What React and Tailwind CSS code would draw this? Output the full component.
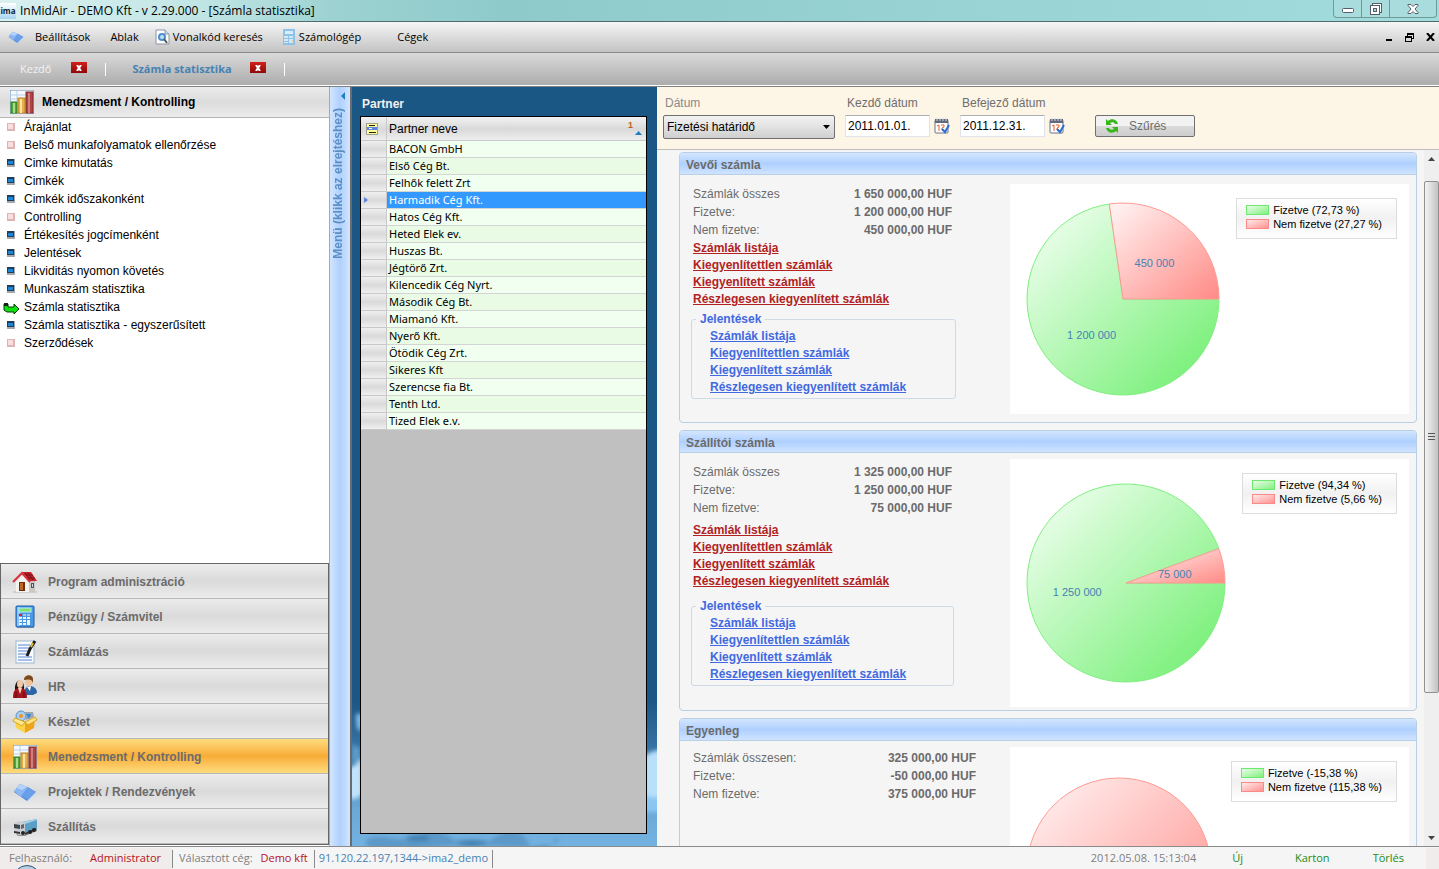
import React, { useState } from "react";

const menuItems = [
  { label: "Árajánlat", kind: "pink" },
  { label: "Belső munkafolyamatok ellenőrzése", kind: "pink" },
  { label: "Cimke kimutatás", kind: "blue" },
  { label: "Cimkék", kind: "blue" },
  { label: "Cimkék időszakonként", kind: "blue" },
  { label: "Controlling", kind: "pink" },
  { label: "Értékesítés jogcímenként", kind: "blue" },
  { label: "Jelentések", kind: "blue" },
  { label: "Likviditás nyomon követés", kind: "blue" },
  { label: "Munkaszám statisztika", kind: "blue" },
  { label: "Számla statisztika", kind: "active" },
  { label: "Számla statisztika - egyszerűsített", kind: "blue" },
  { label: "Szerződések", kind: "pink" },
];

const partners = [
  "BACON GmbH",
  "Első Cég Bt.",
  "Felhők felett Zrt",
  "Harmadik Cég Kft.",
  "Hatos Cég Kft.",
  "Heted Elek ev.",
  "Huszas Bt.",
  "Jégtörő Zrt.",
  "Kilencedik Cég Nyrt.",
  "Második Cég Bt.",
  "Miamanó Kft.",
  "Nyerő Kft.",
  "Ötödik Cég Zrt.",
  "Sikeres Kft",
  "Szerencse fia Bt.",
  "Tenth Ltd.",
  "Tized Elek e.v.",
];

const links = [
  "Számlák listája",
  "Kiegyenlítettlen számlák",
  "Kiegyenlített számlák",
  "Részlegesen kiegyenlített számlák",
];

/* ---------- icons ---------- */

const HouseIcon = () => (
  <svg width="26" height="24" viewBox="0 0 26 24">
    <path d="M1 21h24v2H1z" fill="#cfcfcf" />
    <path d="M4 12l7-7 7 7v10H4z" fill="#f4f2ef" />
    <path d="M17 11h6v11h-6z" fill="#cbc7c2" />
    <path d="M10 2h9l6 9h-7z" fill="#c4222b" />
    <path d="M13 3l5 7M16 3l5 7M12 5h9M15 8h8" stroke="#7d1016" fill="none" />
    <path d="M1 12l9-9 8 9" fill="none" stroke="#d8303a" strokeWidth="2" />
    <path d="M7 12h6v9H7z" fill="#6f2e0c" />
    <path d="M8 13h3v7H8z" fill="#c0661f" />
    <path d="M19 13h3v5h-3z" fill="#555" />
    <path d="M20 14h1v3h-1z" fill="#c9d6e2" />
  </svg>
);

const CalcIcon = () => (
  <svg width="22" height="24" viewBox="0 0 22 24">
    <path d="M3 22h17v1H4z" fill="#a8a8a8" />
    <rect x="2" y="1" width="18" height="21" rx="1" fill="#4a97e6" stroke="#1a5cae" />
    <rect x="3" y="2" width="3" height="19" fill="#8cc4fa" />
    <rect x="5" y="3" width="12" height="4" fill="#7fe06a" stroke="#b9e8ff" />
    <path d="M5 9h3v2H5z" fill="#d8201c" />
    <path d="M9 9h3v2H9zM13 9h3v2h-3z" fill="#a9c3e2" />
    <path d="M5 12h3v2H5zM9 12h3v2H9zM13 12h3v2h-3zM5 15h3v2H5zM9 15h3v2H9zM5 18h3v2H5zM9 18h3v2H9zM13 15h3v5h-3z" fill="#eef6ff" />
  </svg>
);

const NotePenIcon = () => (
  <svg width="24" height="24" viewBox="0 0 24 24">
    <rect x="3" y="1" width="18" height="22" fill="#f7fbff" stroke="#9db9cc" />
    <path d="M5 5h12M5 8h11M5 11h10M5 14h8M5 17h14M5 20h14" stroke="#5b86cf" />
    <path d="M22 1l-5 8-3 7" stroke="#1a1a1a" strokeWidth="3" fill="none" />
    <path d="M20 3l-2 4" stroke="#e8b92e" strokeWidth="2" />
  </svg>
);

const PeopleIcon = () => (
  <svg width="26" height="24" viewBox="0 0 26 24">
    <path d="M12 20c0-7 3-9 6-9s7 2 7 7l-4 2z" fill="#2a66a8" />
    <path d="M15 12l3 4 1-5z" fill="#fff" />
    <ellipse cx="17" cy="6" rx="4" ry="5" fill="#f0c49a" />
    <path d="M12 5c0-6 9-6 9-1v4c-1-4-4-4-9-3z" fill="#7a4a1c" />
    <path d="M3 15C2 3 13 2 12 15z" fill="#1f1614" />
    <ellipse cx="8" cy="9" rx="3" ry="4" fill="#f2c9a5" />
    <path d="M1 23c0-7 2-10 7-10s7 3 7 10z" fill="#a5141f" />
    <path d="M6 13l2 6 2-6z" fill="#f6d5bb" />
    <path d="M4 17v6M12 17v6" stroke="#5f0a10" />
  </svg>
);

const BoxIcon = () => (
  <svg width="26" height="24" viewBox="0 0 26 24">
    <circle cx="9" cy="6" r="5" fill="#a8cff0" stroke="#5a93c9" />
    <circle cx="9" cy="6" r="2" fill="#f0932a" />
    <path d="M13 2h8l1 5-8 3z" fill="#9aa6b2" />
    <path d="M14 4l3 5 2-5z" fill="#3489d8" />
    <path d="M3 9l10 4v10l-9-5z" fill="#fbd24a" />
    <path d="M13 13l10-4-1 9-9 5z" fill="#f0a41a" />
    <path d="M3 8l-2 3 9 5 3-4z" fill="#ffe98a" stroke="#d9a21e" />
    <path d="M23 7l2 3-9 5-3-3z" fill="#ffe27a" stroke="#d9a21e" />
  </svg>
);

const ChartIcon = () => (
  <svg width="24" height="24" viewBox="0 0 24 24">
    <rect x="0" y="0" width="24" height="24" fill="#f6fafe" stroke="#5d86b8" />
    <path d="M1 5h15M1 9h15M7 1v10" stroke="#b9cfe8" fill="none" />
    <rect x="1" y="12" width="6" height="11" fill="#55a83c" stroke="#2f7a24" />
    <rect x="3" y="13" width="2" height="10" fill="#a8dd90" />
    <rect x="8" y="8" width="7" height="15" fill="#e3b04c" stroke="#b98222" />
    <rect x="10" y="9" width="2" height="14" fill="#fbe3a4" />
    <rect x="16" y="2" width="7" height="21" fill="#ad4545" stroke="#842c2c" />
    <rect x="18" y="3" width="2" height="20" fill="#cf7d7d" />
  </svg>
);

const FolderIcon = ({ size = 24 }) => (
  <svg width={size} height={size} viewBox="0 0 24 24">
    <path d="M1 12l6-8 7 3 9 5-9 9z" fill="#4f86d6" />
    <path d="M1 11l6-7 7 3 3 3-9 7z" fill="#8ab8f4" />
    <path d="M8 16l7-9 8 5-8 8z" fill="#6a9ee8" />
    <path d="M7 4l7 3-5 3-5-2z" fill="#b5d4fb" />
    <path d="M14 21l9-9v2l-9 8z" fill="#c3daf6" />
  </svg>
);

const TruckIcon = () => (
  <svg width="24" height="18" viewBox="0 0 24 18">
    <path d="M3 16l9 1 12-6v2l-12 5H5z" fill="#8c8c8c" />
    <path d="M9 4l15-3v10l-12 5z" fill="#5b9fc4" />
    <path d="M9 4l15-3v1L12 6z" fill="#9fd0e8" />
    <path d="M1 5l6-2 5 2v10l-6 2-5-3z" fill="#c9ccd0" />
    <path d="M1 6l6 1v4l-6-1z" fill="#3c444c" />
    <path d="M8 7l3-1v4l-3 1z" fill="#5b6670" />
    <path d="M1 13l6 1v2l-6-1zM12 15l11-5v2l-11 5z" fill="#333" />
    <circle cx="10" cy="15" r="2" fill="#222" />
    <circle cx="17" cy="14" r="2" fill="#222" />
    <circle cx="21" cy="12" r="2" fill="#222" />
  </svg>
);

const SearchDocIcon = () => (
  <svg width="16" height="16" viewBox="0 0 16 16">
    <path d="M1 1h9l4 4v10H1z" fill="#fff" stroke="#8a94a6" />
    <path d="M10 1v4h4" fill="#d5dde8" stroke="#8a94a6" />
    <circle cx="7" cy="8" r="3" fill="#bfe3fb" stroke="#4f8fd0" strokeWidth="2" />
    <path d="M9 10l3 4" stroke="#555" strokeWidth="2" />
  </svg>
);

const SmallCalcIcon = () => (
  <svg width="12" height="16" viewBox="0 0 12 16">
    <rect x="0" y="0" width="12" height="16" fill="#8fc2e8" />
    <rect x="2" y="2" width="8" height="3" fill="#d8eefb" />
    <path d="M1 7h4v2H1zM6 7h4v2H6zM1 10h4v2H1zM6 10h4v4H6zM1 13h4v1H1z" fill="#d4e8f6" />
    <path d="M8 11h2v2H8z" fill="#f0d9a0" />
  </svg>
);

const CalendarIcon = () => (
  <svg width="16" height="16" viewBox="0 0 16 16">
    <rect x="1" y="2" width="13" height="13" rx="1" fill="#fff" stroke="#6a7088" />
    <path d="M1 1h13v4H1z" fill="#62687c" />
    <path d="M3 0v3M6 0v3M9 0v3M12 0v3" stroke="#d5dae6" />
    <path d="M3 8l2-1v6M7 7h3v2l-2 1v2h2" stroke="#e3602a" fill="none" />
    <path d="M8 11l3 3 4-7" stroke="#2a6fcf" strokeWidth="2" fill="none" />
  </svg>
);

const RefreshIcon = () => (
  <svg width="14" height="14" viewBox="0 0 14 14">
    <path d="M1 0v6h6L5 4c2-1 4-1 5 1h3C12 0 6-1 3 2z" fill="#36b81a" />
    <path d="M13 14V8H7l2 2c-2 1-4 1-5-1H1c1 5 7 6 10 3z" fill="#36b81a" />
  </svg>
);

const ItemIcon = ({ kind }) => {
  if (kind === "active") {
    return (
      <svg width="16" height="14" viewBox="0 0 16 14" className="mt-1">
        <path d="M1 2h4v3h6V2l5 5-5 5v-2H4L1 8z" fill="#0fe00f" stroke="#063b06" />
        <path d="M1 1h4v3H1z" fill="#0a2a0a" />
      </svg>
    );
  }
  if (kind === "pink") {
    return (
      <svg width="8" height="8" viewBox="0 0 8 8">
        <rect width="8" height="8" fill="#dfb4b4" />
        <rect x="1" y="1" width="5" height="5" fill="#f9dede" />
      </svg>
    );
  }
  return (
    <svg width="8" height="8" viewBox="0 0 8 8">
      <rect width="8" height="8" fill="#a4a8ad" />
      <rect width="7" height="6" fill="#1d3f5c" />
      <rect x="1" y="2" width="5" height="3" fill="#1c86d8" />
    </svg>
  );
};

const modules = [
  { label: "Program adminisztráció", Icon: HouseIcon },
  { label: "Pénzügy / Számvitel", Icon: CalcIcon },
  { label: "Számlázás", Icon: NotePenIcon },
  { label: "HR", Icon: PeopleIcon },
  { label: "Készlet", Icon: BoxIcon },
  { label: "Menedzsment / Kontrolling", Icon: ChartIcon },
  { label: "Projektek / Rendezvények", Icon: FolderIcon },
  { label: "Szállítás", Icon: TruckIcon },
];

/* ---------- window chrome ---------- */

const TitleBar = () => (
  <header className="flex h-[22px] shrink-0 items-start justify-between border-b border-[#4f6b6b] bg-linear-to-r from-[#b5e2e0] via-[#8fcaca] via-35% to-[#a3dcdc]">
    <div className="flex h-[21px] items-center gap-1 bg-linear-to-r from-[#d9f0ef] via-[#c6e8e7] to-transparent pr-4">
      <span className="h-4 w-4 overflow-hidden bg-linear-to-b from-white to-[#a8d4f0] text-center text-[8px] leading-4 font-bold text-[#123]">
        ima
      </span>
      <h1 className="text-xs text-black">InMidAir - DEMO Kft - v 2.29.000 - [Számla statisztika]</h1>
    </div>
    <div className="mr-0.5 flex h-[18px] rounded-b border border-t-0 border-[#6f9a9a] bg-[#a9dcdc]">
      <button type="button" aria-label="Kis méret" className="flex w-7 items-center justify-center border-r border-[#6f9a9a]">
        <svg width="12" height="5" viewBox="0 0 12 5" className="mt-1">
          <rect x="0.5" y="0.5" width="11" height="4" rx="1" fill="#fff" stroke="#555c6b" />
        </svg>
      </button>
      <button type="button" aria-label="Előző méret" className="flex w-7 items-center justify-center border-r border-[#6f9a9a]">
        <svg width="12" height="12" viewBox="0 0 12 12">
          <rect x="2.5" y="0.5" width="9" height="9" fill="#fff" stroke="#555c6b" />
          <rect x="0.5" y="2.5" width="9" height="9" fill="#fff" stroke="#555c6b" />
          <rect x="3.5" y="5.5" width="3" height="3" fill="#a9dcdc" stroke="#555c6b" />
        </svg>
      </button>
      <button type="button" aria-label="Bezárás" className="flex w-[46px] items-center justify-center">
        <svg width="12" height="10" viewBox="0 0 12 10">
          <path d="M1 0.5h3l2 2 2-2h3v1L8 5l3 3.500v1H8l-2-2-2 2H1v-1L4 5 1 1.500z" fill="#fff" stroke="#555c6b" />
        </svg>
      </button>
    </div>
  </header>
);

const MenuBar = () => (
  <nav className="flex h-[31px] shrink-0 items-center justify-between border-b border-[#8a8a8a] bg-linear-to-b from-[#f6f6f6] to-[#c3c3c3] pr-1 pl-2 text-[11px] text-black">
    <div className="flex items-center">
      <FolderIcon size={16} />
      <button type="button" className="ml-[11px]">Beállítások</button>
      <button type="button" className="ml-5">Ablak</button>
      <button type="button" className="ml-4 flex items-center gap-0.5">
        <SearchDocIcon />
        Vonalkód keresés
      </button>
      <button type="button" className="ml-5 flex items-center gap-1">
        <SmallCalcIcon />
        Számológép
      </button>
      <button type="button" className="ml-9">Cégek</button>
    </div>
    <div className="flex items-center gap-3">
      <button type="button" aria-label="Ablak kis méret">
        <svg width="8" height="8" viewBox="0 0 8 8"><path d="M1 6h6v2H1z" /></svg>
      </button>
      <button type="button" aria-label="Ablak előző méret">
        <svg width="9" height="9" viewBox="0 0 9 9">
          <path d="M2 0h7v6H7V5h1V2H3v1H2zM0 3h7v6H0zM1 5v3h5V5z" fillRule="evenodd" />
        </svg>
      </button>
      <button type="button" aria-label="Ablak bezárása">
        <svg width="9" height="8" viewBox="0 0 9 8">
          <path d="M1 0l7 8M8 0L1 8" stroke="#000" strokeWidth="2" />
        </svg>
      </button>
    </div>
  </nav>
);

const CloseTab = ({ label }) => (
  <button
    type="button"
    aria-label={label}
    className="mb-1 flex h-[11px] w-4 items-center justify-center bg-linear-to-b from-[#d4201c] to-[#8e0808]"
  >
    <svg width="6" height="6" viewBox="0 0 6 6">
      <path d="M1 0l4 6M5 0L1 6" stroke="#fff" strokeWidth="2" />
    </svg>
  </button>
);

const TabBar = () => (
  <div className="flex h-[34px] shrink-0 items-center border-b border-[#808080] bg-linear-to-b from-[#dadada] to-[#ababab] pl-5 text-[11px] shadow-[inset_0_-1px_0_#fff]">
    <button type="button" className="mr-5 text-[#f2f2f2]">Kezdő</button>
    <CloseTab label="Kezdő bezárása" />
    <span className="ml-[18px] h-[13px] w-px bg-white" />
    <button type="button" className="mr-[18px] ml-[26px] font-bold text-[#4682b4]">Számla statisztika</button>
    <CloseTab label="Számla statisztika bezárása" />
    <span className="ml-[18px] h-[13px] w-px bg-white" />
  </div>
);

/* ---------- left side ---------- */

const Sidebar = () => {
  const [active, setActive] = useState("Menedzsment / Kontrolling");

  return (
    <aside className="flex w-[329px] shrink-0 flex-col bg-white">
      <div className="flex h-[31px] shrink-0 items-center gap-2 border-b border-[#b5b5b5] bg-linear-to-b from-[#ececec] via-[#dcdcdc] to-[#ececec] pl-[10px]">
        <ChartIcon />
        <h2 className="text-xs font-bold text-black">Menedzsment / Kontrolling</h2>
      </div>
      <ul className="flex-1">
        {menuItems.map((item) => (
          <li key={item.label}>
            <button type="button" className="flex h-[18px] w-full items-center text-left text-xs text-black">
              <span className="flex w-[22px] shrink-0 justify-center">
                <ItemIcon kind={item.kind} />
              </span>
              <span className="pl-0.5">{item.label}</span>
            </button>
          </li>
        ))}
      </ul>
      <div className="mb-px border border-[#666]">
        {modules.map(({ label, Icon }) => (
          <button
            key={label}
            type="button"
            onClick={() => setActive(label)}
            className={`flex h-[35px] w-full items-center border-b border-[#b8b8b8] pt-0.5 text-left text-xs font-bold text-[#6b6b6b] ${
              active === label
                ? "bg-linear-to-b from-[#fddc7c] via-[#f8ac35] to-[#fddc7c]"
                : "bg-linear-to-b from-[#ececec] via-[#dadada] to-[#ececec]"
            }`}
          >
            <span className="flex w-[47px] shrink-0 justify-center">
              <Icon />
            </span>
            {label}
          </button>
        ))}
      </div>
    </aside>
  );
};

const CollapseStrip = () => (
  <button
    type="button"
    className="flex w-[23px] shrink-0 flex-col items-center border-r-2 border-l border-r-[#6b6b6b] border-l-[#a9a9a9] bg-linear-to-r from-[#d2e5ff] via-[#afd0ff] to-[#d2e5ff] pt-[5px]"
  >
    <svg width="5" height="8" viewBox="0 0 5 8" className="ml-1">
      <path d="M5 0v8L1 4z" fill="#1a7fc4" />
    </svg>
    <span className="mt-2 mr-1 rotate-180 text-xs leading-4 font-bold whitespace-nowrap text-[#5b8fc4] [writing-mode:vertical-rl]">
      Menü (klikk az elrejtéshez)
    </span>
  </button>
);

/* ---------- partner grid ---------- */

const SkyBackdrop = () => (
  <svg viewBox="0 0 305 146" preserveAspectRatio="none" className="absolute inset-x-0 bottom-0 h-[146px] w-full">
    <defs>
      <linearGradient id="sky" x1="0" y1="0" x2="0" y2="1">
        <stop offset="0" stopColor="#1b5785" />
        <stop offset="0.4" stopColor="#3c79aa" />
        <stop offset="0.75" stopColor="#6aa8d8" />
        <stop offset="1" stopColor="#74b2e2" />
      </linearGradient>
      <filter id="haze" x="-20%" y="-20%" width="140%" height="140%">
        <feGaussianBlur stdDeviation="2" />
      </filter>
    </defs>
    <rect width="305" height="146" fill="url(#sky)" />
    <g filter="url(#haze)">
      <path d="M4 14l6 0v18l-5-4z" fill="#8cc6ef" />
      <path d="M0 42q4 8 8 4v16H0z" fill="#5b9ccb" />
      <path d="M-4 68q8-2 14-10v36q-6 8-14 4z" fill="#c0e3fb" />
      <path d="M292 56q8-6 18-6v46q-8 6-18 0z" fill="#b9e0fb" />
      <path d="M290 92q8 8 20 4v16h-20z" fill="#8ac6f2" />
      <path d="M14 140q10-6 24-2t30-4 34 6 40-2 34 4 30-6v6q-30 8-60 4t-70 2-62-2z" fill="#5b98c8" />
      <ellipse cx="66" cy="138" rx="12" ry="3" fill="#427eae" />
      <ellipse cx="120" cy="143" rx="16" ry="3" fill="#427eae" />
    </g>
  </svg>
);

const PartnerPanel = () => {
  const [selected, setSelected] = useState("Harmadik Cég Kft.");

  return (
    <section className="relative flex w-[305px] shrink-0 flex-col overflow-hidden bg-[#1b5785] px-2 pb-3">
      <SkyBackdrop />
      <h2 className="flex h-[29px] items-center pt-1 pl-0.5 text-xs font-bold text-[#f0f0f0]">Partner</h2>
      <div className="relative mr-0.5 flex-1 border border-black bg-[#c0c0c0]">
        <table className="w-full table-fixed border-separate border-spacing-0 text-[11px] leading-4 text-black">
          <thead>
            <tr className="h-6 bg-linear-to-b from-[#f2f2f2] via-[#d9d9d9] to-[#f0f0f0]">
              <th className="w-[26px] border-r border-b border-[#c8c8c8] p-0">
                <svg width="12" height="12" viewBox="0 0 12 12" className="mr-auto ml-[5px]">
                  <rect x="0.500" y="0.500" width="11" height="11" fill="#fdfd96" stroke="#a0a08c" />
                  <path d="M3 2h6v1H3zM3 9h7v1H3z" fill="#222" />
                  <path d="M1 4h10v3H1z" fill="#5a84e0" />
                  <path d="M3 5h3v1H3z" fill="#fff" />
                </svg>
              </th>
              <th className="border-b border-[#c8c8c8] p-0 text-left font-normal">
                <div className="flex items-center justify-between pr-1 pl-0.5 text-xs">
                  Partner neve
                  <span className="flex items-end gap-0.5">
                    <span className="mb-2 text-[9px] leading-3 font-bold text-[#b8651b]">1</span>
                    <svg width="7" height="4" viewBox="0 0 7 4" className="mb-1">
                      <path d="M0 4l3.500-4L7 4z" fill="#1a7fc4" />
                    </svg>
                  </span>
                </div>
              </th>
            </tr>
          </thead>
          <tbody className="font-['Noto_Sans','Open_Sans',sans-serif]">
            {partners.map((name, i) => {
              const isSelected = name === selected;
              let rowColor = i % 2 ? "bg-[#e9fbe5]" : "bg-[#f0fff0]";
              if (isSelected) rowColor = "bg-[#3399ff] text-white";
              return (
                <tr key={name} onClick={() => setSelected(name)}>
                  <td className="border-r border-b border-[#c8c8c8] bg-linear-to-b from-[#efefef] via-[#dadada] to-[#efefef] p-0">
                    {isSelected && (
                      <svg width="4" height="6" viewBox="0 0 4 6" className="ml-[3px]">
                        <path d="M0 0v6l4-3z" fill="#5a84e0" />
                      </svg>
                    )}
                  </td>
                  <td className={`border-b border-[#d4d4d4] py-0 pr-0 pl-0.5 ${rowColor}`}>{name}</td>
                </tr>
              );
            })}
          </tbody>
        </table>
      </div>
    </section>
  );
};

/* ---------- filter bar ---------- */

const DateField = ({ id, label, value }) => (
  <div className="flex flex-col gap-1">
    <label htmlFor={id} className="pl-0.5 leading-4">{label}</label>
    <div className="flex items-center gap-1">
      <input
        id={id}
        type="text"
        defaultValue={value}
        className="h-[22px] w-[85px] border border-[#e2e3ea] border-t-[#abadb3] bg-white px-0.5 text-black"
      />
      <button type="button" aria-label={`${label} naptár`}>
        <CalendarIcon />
      </button>
    </div>
  </div>
);

const FilterBar = () => (
  <form className="flex h-[63px] shrink-0 items-start border-b border-[#bdbdbd] bg-[#fdf5e6] pt-2 pl-1.5 text-xs text-[#6e6e6e]">
    <div className="flex flex-col gap-1">
      <label htmlFor="datum" className="pl-0.5 leading-4 text-[#8a8a8a]">Dátum</label>
      <div className="relative">
        <select
          id="datum"
          className="h-6 w-[172px] appearance-none rounded-xs border border-[#707070] bg-linear-to-b from-[#f2f2f2] via-[#e2e2e2] to-[#cfcfcf] px-[3px] text-black"
        >
          <option>Fizetési határidő</option>
        </select>
        <svg width="7" height="4" viewBox="0 0 7 4" className="pointer-events-none absolute top-[10px] right-[5px]">
          <path d="M0 0h7L3.500 4z" fill="#000" />
        </svg>
      </div>
    </div>
    <div className="ml-[10px]">
      <DateField id="kezdo" label="Kezdő dátum" value="2011.01.01." />
    </div>
    <div className="ml-[10px]">
      <DateField id="befejezo" label="Befejező dátum" value="2011.12.31." />
    </div>
    <button
      type="button"
      className="mt-5 ml-[30px] flex h-[22px] w-[100px] items-center gap-[10px] rounded-xs border border-[#707070] bg-linear-to-b from-[#f2f2f2] from-50% via-[#dadada] via-50% to-[#cdcdcd] pl-[9px]"
    >
      <RefreshIcon />
      Szűrés
    </button>
  </form>
);

/* ---------- charts ---------- */

const toPoint = (r, deg, scale = 1) => {
  const rad = (deg * Math.PI) / 180;
  return [r + r * scale * Math.cos(rad), r - r * scale * Math.sin(rad)];
};

const PieChart = ({ id, radius, share, paidLabel, unpaidLabel }) => {
  const angle = share * 3.6;
  const full = share >= 100;
  const [x, y] = toPoint(radius, angle);
  const [ux, uy] = toPoint(radius, angle / 2, 0.5);
  const [px, py] = toPoint(radius, angle / 2 + 180, 0.5);
  const d = radius * 2;

  return (
    <svg width={d} height={d} viewBox={`0 0 ${d} ${d}`} className="shrink-0 overflow-visible">
      <defs>
        <linearGradient id={`${id}-green`} x1="0" y1="0" x2="1" y2="1">
          <stop offset="0.05" stopColor="#f2fff2" />
          <stop offset="0.9" stopColor="#78f078" />
        </linearGradient>
        <linearGradient id={`${id}-red`} x1="0" y1="0" x2="1" y2="1">
          <stop offset="0" stopColor="#fff6f6" />
          <stop offset="1" stopColor="#ff8a85" />
        </linearGradient>
      </defs>
      {full ? (
        <circle cx={radius} cy={radius} r={radius} fill={`url(#${id}-red)`} stroke="#ff9a94" />
      ) : (
        <>
          <path
            d={`M${radius} ${radius}L${x} ${y}A${radius} ${radius} 0 1 0 ${d} ${radius}Z`}
            fill={`url(#${id}-green)`}
            stroke="#7ff07f"
          />
          <path
            d={`M${radius} ${radius}L${x} ${y}A${radius} ${radius} 0 0 1 ${d} ${radius}Z`}
            fill={`url(#${id}-red)`}
            stroke="#ff9a94"
          />
          <g fill="#4682b4" fontSize="11" textAnchor="middle">
            <text x={ux} y={uy + 4}>{unpaidLabel}</text>
            <text x={px} y={py + 4}>{paidLabel}</text>
          </g>
        </>
      )}
    </svg>
  );
};

const ChartLegend = ({ paid, unpaid }) => (
  <ul className="mt-3.5 mr-3 h-[41px] self-start border border-[#dcdcdc] bg-linear-to-b from-white via-[#f1f1f1] to-white pt-1 pr-3.5 pl-[9px] text-[11px] leading-3.5 text-black">
    <li className="flex items-center gap-1">
      <span className="h-[10px] w-[23px] border border-[#6fe86f] bg-linear-to-br from-[#e8fce8] to-[#7cf07c]" />
      Fizetve ({paid} %)
    </li>
    <li className="flex items-center gap-1">
      <span className="h-[10px] w-[23px] border border-[#fb8a86] bg-linear-to-br from-[#ffeaea] to-[#ff9292]" />
      Nem fizetve ({unpaid} %)
    </li>
  </ul>
);

const LinkList = ({ className }) => (
  <ul className={`font-bold ${className}`}>
    {links.map((text) => (
      <li key={text} className="h-[17px] leading-[17px]">
        <a href="#" className="underline">{text}</a>
      </li>
    ))}
  </ul>
);

const StatPanel = ({ title, rows, rowsClass, bodyClass, linksClass, fieldsetClass, chartClass, chart, legend }) => (
  <section className="shrink-0 rounded-[4px] border border-[#b9cfe4] text-xs text-[#6b6b6b]">
    <h3 className="h-[22px] rounded-t-[3px] border-b border-[#b9cfe4] bg-linear-to-b from-[#d4e6ff] via-[#afd0ff] to-[#cfe3ff] pl-1.5 leading-6 font-bold">
      {title}
    </h3>
    <div className={`flex pr-[7px] ${bodyClass}`}>
      <div className="w-[330px] shrink-0 pl-[13px]">
        <dl className={rowsClass}>
          {rows.map(([name, value]) => (
            <div key={name} className="flex h-[18px] items-center justify-between">
              <dt>{name}</dt>
              <dd className="font-bold">{value}</dd>
            </div>
          ))}
        </dl>
        {linksClass && <LinkList className={linksClass} />}
        {fieldsetClass && (
          <fieldset className={`-ml-0.5 rounded-[3px] border border-[#cfdae6] pb-0.5 pl-[18px] text-[#4169e1] ${fieldsetClass}`}>
            <legend className="-ml-3.5 px-1 leading-4 font-bold">Jelentések</legend>
            <LinkList className="pt-px" />
          </fieldset>
        )}
      </div>
      <div className={`flex flex-1 items-center justify-between bg-white pl-[17px] ${chartClass}`}>
        <PieChart {...chart} />
        <ChartLegend {...legend} />
      </div>
    </div>
  </section>
);

const ScrollBar = () => (
  <div className="flex w-[15px] shrink-0 flex-col items-center bg-[#efefef]">
    <button type="button" aria-label="Fel" className="flex h-[31px] w-full justify-center pt-[7px]">
      <svg width="7" height="4" viewBox="0 0 7 4"><path d="M0 4l3.500-4L7 4z" fill="#444" /></svg>
    </button>
    <div className="flex w-full flex-1 items-center justify-center rounded-xs border border-[#909090] bg-linear-to-r from-[#f4f4f4] via-[#dcdcdc] to-[#c2c2c6]">
      <svg width="7" height="8" viewBox="0 0 7 8">
        <path d="M0 0h7v1H0zM0 3h7v1H0zM0 6h7v1H0z" fill="#555" />
      </svg>
    </div>
    <button type="button" aria-label="Le" className="flex h-[153px] w-full items-end justify-center pb-[6px]">
      <svg width="7" height="4" viewBox="0 0 7 4"><path d="M0 0h7L3.500 4z" fill="#444" /></svg>
    </button>
  </div>
);

const Statistics = () => (
  <main className="flex min-w-0 flex-1 flex-col bg-[#f5f5f5]">
    <FilterBar />
    <div className="flex min-h-0 flex-1">
      <div className="flex min-w-0 flex-1 flex-col gap-[7px] overflow-hidden pt-0.5 pr-[7px] pl-[22px]">
        <StatPanel
          title="Vevői számla"
          rows={[
            ["Számlák összes", "1 650 000,00 HUF"],
            ["Fizetve:", "1 200 000,00 HUF"],
            ["Nem fizetve:", "450 000,00 HUF"],
          ]}
          bodyClass="pt-[9px] pb-2"
          rowsClass="mr-[58px] pt-px"
          linksClass="mt-px text-[#b22222]"
          fieldsetClass="mt-[3px] mr-[54px]"
          chartClass="h-[230px]"
          chart={{ id: "vevoi", radius: 96, share: 27.27, paidLabel: "1 200 000", unpaidLabel: "450 000" }}
          legend={{ paid: "72,73", unpaid: "27,27" }}
        />
        <StatPanel
          title="Szállítói számla"
          rows={[
            ["Számlák összes", "1 325 000,00 HUF"],
            ["Fizetve:", "1 250 000,00 HUF"],
            ["Nem fizetve:", "75 000,00 HUF"],
          ]}
          bodyClass="pt-1.5 pb-[3px]"
          rowsClass="mr-[58px] pt-1"
          linksClass="mt-[5px] text-[#b22222]"
          fieldsetClass="mt-2 mr-[56px]"
          chartClass="h-[248px]"
          chart={{ id: "szallitoi", radius: 99, share: 5.66, paidLabel: "1 250 000", unpaidLabel: "75 000" }}
          legend={{ paid: "94,34", unpaid: "5,66" }}
        />
        <StatPanel
          title="Egyenleg"
          rows={[
            ["Számlák összesen:", "325 000,00 HUF"],
            ["Fizetve:", "-50 000,00 HUF"],
            ["Nem fizetve:", "375 000,00 HUF"],
          ]}
          bodyClass="pt-1.5 pb-[3px]"
          rowsClass="mr-[34px] pt-0.5"
          chartClass="h-[246px]"
          chart={{ id: "egyenleg", radius: 92, share: 115.38 }}
          legend={{ paid: "-15,38", unpaid: "115,38" }}
        />
      </div>
      <ScrollBar />
    </div>
  </main>
);

/* ---------- status bar ---------- */

const StatusBar = () => (
  <footer className="relative flex h-[23px] shrink-0 items-center justify-between overflow-hidden border-t border-[#8a8a8a] bg-[#f5f5f5] pt-px text-[11px] text-[#808080]">
    <div className="flex h-full items-center">
      <div className="flex h-full items-center gap-[18px] bg-[#f0eceb] pr-[11px] pl-[9px]">
        <span>Felhasználó:</span>
        <span className="text-[#b5121b]">Administrator</span>
      </div>
      <div className="flex h-[18px] items-center gap-2 border-l border-[#8a8a8a] pr-1.5 pl-1.5">
        <span>Választott cég:</span>
        <span className="text-[#b5121b]">Demo kft</span>
      </div>
      <span className="flex h-[18px] items-center border-x border-[#8a8a8a] px-1 text-[#4682b4]">
        91.120.22.197,1344-&gt;ima2_demo
      </span>
    </div>
    <div className="flex h-full items-center">
      <span className="mr-9">2012.05.08. 15:13:04</span>
      <button type="button" className="mr-[52px] text-[#228b22]">Új</button>
      <button type="button" className="mr-[43px] text-[#228b22]">Karton</button>
      <button type="button" className="mr-[22px] text-[#228b22]">Törlés</button>
      <span className="h-full w-[13px] bg-[#f0eceb]" />
    </div>
    <span className="absolute top-[18px] left-[13px] h-7 w-7 rounded-full border border-[#2c5378] bg-[#b9cfe0]" />
  </footer>
);

export default function App() {
  return (
    <div className="flex h-screen flex-col overflow-hidden bg-[#f5f5f5] font-['Open_Sans','Noto_Sans',sans-serif]">
      <TitleBar />
      <MenuBar />
      <TabBar />
      <div className="flex min-h-0 flex-1 font-['Liberation_Sans',Arial,sans-serif]">
        <Sidebar />
        <CollapseStrip />
        <PartnerPanel />
        <Statistics />
      </div>
      <StatusBar />
    </div>
  );
}
